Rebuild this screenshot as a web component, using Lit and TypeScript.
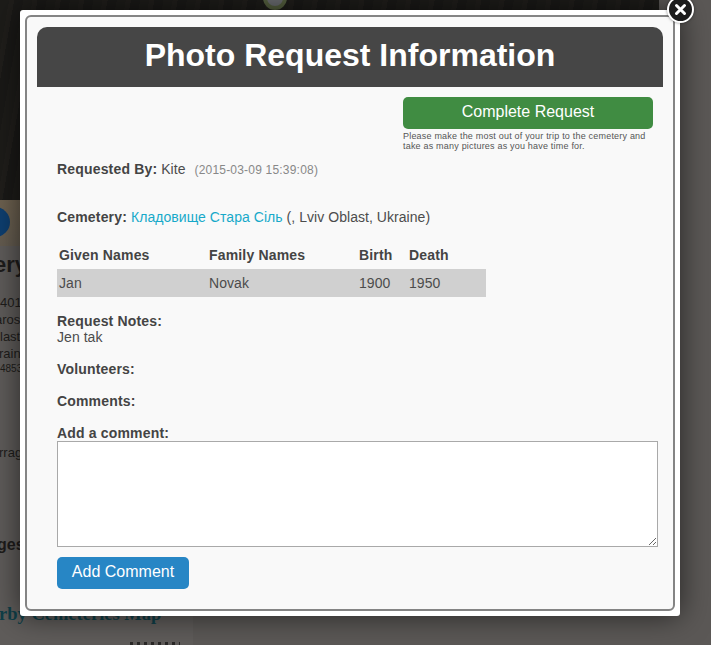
import { LitElement, html, css } from 'lit';
import { customElement } from 'lit/decorators.js';

@customElement('app-root')
export class AppRoot extends LitElement {
  static styles = css`
    :host {
      display: block;
      position: relative;
      width: 711px;
      height: 645px;
      overflow: hidden;
      background: #5b5856;
      font-family: 'Liberation Sans', Arial, sans-serif;
      font-size: 14px;
      color: #4c4c4c;
      letter-spacing: 0.05px;
    }
    b,
    .field,
    .row.head {
      color: #444;
      font-weight: bold;
      letter-spacing: 0.17px;
    }

    /* dimmed page behind the dialog */
    .page {
      position: absolute;
      inset: 0;
      color: #1e1c1b;
    }
    .photo {
      position: absolute;
      left: 0;
      top: 0;
      width: 659px;
      height: 200px;
      background: repeating-linear-gradient(100deg, #1d1c19 0 9px, #201e1b 9px 14px, #1a1917 14px 23px);
    }
    .marker {
      position: absolute;
      left: 263px;
      top: -14px;
      width: 24px;
      height: 24px;
      border-radius: 50%;
      background: #6a6c70;
      border: 4px solid #55603f;
      box-sizing: border-box;
    }
    .band {
      position: absolute;
      left: 0;
      top: 200px;
      width: 193px;
      height: 46px;
      background: linear-gradient(#6e6250, #645c50);
    }
    .avatar {
      position: absolute;
      left: -20px;
      top: 207px;
      width: 30px;
      height: 30px;
      border-radius: 50%;
      background: #0e3f70;
    }
    .column {
      position: absolute;
      left: 0;
      top: 246px;
      width: 193px;
      height: 399px;
      background: #5f5c5a;
    }
    /* tops of an unreadable line cut off by the window edge */
    .sliver {
      position: absolute;
      left: 130px;
      top: 642px;
      width: 50px;
      height: 3px;
      background: repeating-linear-gradient(90deg, #2a2827 0 3px, transparent 3px 7px);
    }
    .bg-text {
      position: absolute;
      white-space: nowrap;
      line-height: 16px;
      font-size: 13px;
      letter-spacing: 0;
    }
    .heading {
      font: bold 22px/24px 'Liberation Sans', sans-serif;
    }
    .label {
      font-size: 16px;
      font-weight: bold;
    }
    .tiny {
      font-size: 10px;
    }
    .map-title {
      font: bold 18.5px/22px 'Liberation Serif', serif;
      color: #0f3f48;
    }

    .dialog {
      position: absolute;
      left: 20px;
      top: 10px;
      width: 660px;
      height: 606px;
      box-sizing: border-box;
      padding: 5px;
      background: #fff;
      border-radius: 3px;
      box-shadow: 0 0 30px rgba(0, 0, 0, 0.6);
    }
    .inner {
      height: 100%;
      box-sizing: border-box;
      padding: 10px;
      background: #f9f9f9;
      border: 2px solid #848484;
      border-radius: 6px;
    }
    .title {
      height: 60px;
      margin: 0;
      background: #464646;
      border-radius: 10px 10px 0 0;
      color: #fff;
      font-size: 32px;
      font-weight: bold;
      line-height: 56px;
      text-align: center;
      letter-spacing: 0;
    }
    .body {
      padding: 10px 5px 0 20px;
    }
    .complete {
      width: 250px;
      margin-left: 346px;
      font-size: 9px;
      line-height: 10px;
      color: #555;
      letter-spacing: 0.2px;
    }
    .btn {
      display: block;
      border: 0;
      border-radius: 5px;
      color: #fff;
      font: 16px 'Liberation Sans', Arial, sans-serif;
      height: 32px;
      padding: 0;
    }
    .btn-green {
      width: 250px;
      margin-bottom: 2px;
      background: #408c42;
      padding-bottom: 3px;
    }
    .btn-blue {
      width: 132px;
      margin-top: 10px;
      background: #2786c5;
      padding-bottom: 2px;
    }
    .requested {
      margin-top: 9px;
      line-height: 18px;
    }
    .stamp {
      margin-left: 5px;
      font-size: 12px;
      color: #888;
      letter-spacing: 0.2px;
    }
    .cemetery {
      margin-top: 29px;
      line-height: 18px;
    }
    a {
      color: #17a9c9;
      text-decoration: none;
    }
    .names {
      width: 429px;
      margin-top: 15px;
    }
    .row {
      display: grid;
      grid-template-columns: 150px 150px 50px 1fr;
      height: 28px;
      align-items: center;
      padding-left: 2px;
    }
    .row.alt {
      background: #d0d0d0;
    }
    .notes {
      margin-top: 16px;
      line-height: 16px;
    }
    .field {
      margin-top: 16px;
      line-height: 16px;
    }
    textarea {
      display: block;
      width: 601px;
      height: 106px;
      box-sizing: border-box;
      margin: 0;
      background: #fff;
      border: 1px solid #a9a9a9;
      border-radius: 0;
      outline: none;
    }

    .close {
      position: absolute;
      left: 667px;
      top: -4px;
      width: 27px;
      height: 27px;
      box-sizing: border-box;
      border: 2px solid #fff;
      border-radius: 50%;
      background: #1c1c1c;
      box-shadow: 0 0 3px rgba(0, 0, 0, 0.5);
      display: flex;
      align-items: center;
      justify-content: center;
    }
  `;

  render() {
    return html`
      <div class="page">
        <div class="photo"></div>
        <div class="marker"></div>
        <div class="band"></div>
        <div class="avatar"></div>
        <div class="column"></div>
        <div class="bg-text heading" style="left:-6px;top:253px">ery</div>
        <div class="bg-text" style="left:0;top:295px">401</div>
        <div class="bg-text" style="left:-5px;top:312px">aros</div>
        <div class="bg-text" style="left:0;top:329px">last</div>
        <div class="bg-text" style="left:-1px;top:346px">rain</div>
        <div class="bg-text tiny" style="left:0;top:361px">4853</div>
        <div class="bg-text" style="left:-1px;top:445px">rrag</div>
        <div class="bg-text label" style="left:-3px;top:537px">ges</div>
        <div class="bg-text map-title" style="left:-1px;top:603px">rby Cemeteries Map</div>
        <div class="sliver"></div>
      </div>

      <div class="dialog">
        <div class="inner">
          <h1 class="title">Photo Request Information</h1>
          <div class="body">
            <div class="complete">
              <button class="btn btn-green">Complete Request</button>
              Please make the most out of your trip to the cemetery and take as many pictures as you have time for.
            </div>
            <div class="requested">
              <b>Requested By:</b> Kite <span class="stamp">(2015-03-09 15:39:08)</span>
            </div>
            <div class="cemetery">
              <b>Cemetery:</b> <a href="#">Кладовище Стара Сіль</a> (, Lviv Oblast, Ukraine)
            </div>
            <div class="names">
              <div class="row head">
                <span>Given Names</span><span>Family Names</span><span>Birth</span><span>Death</span>
              </div>
              <div class="row alt">
                <span>Jan</span><span>Novak</span><span>1900</span><span>1950</span>
              </div>
            </div>
            <div class="notes"><b>Request Notes:</b><br />Jen tak</div>
            <div class="field">Volunteers:</div>
            <div class="field">Comments:</div>
            <div class="field">Add a comment:</div>
            <textarea></textarea>
            <button class="btn btn-blue">Add Comment</button>
          </div>
        </div>
      </div>

      <div class="close">
        <svg width="13" height="13" viewBox="0 0 13 13">
          <path d="M2.5 2.5l8 8M10.5 2.5l-8 8" stroke="#fff" stroke-width="3" stroke-linecap="round" />
        </svg>
      </div>
    `;
  }
}
